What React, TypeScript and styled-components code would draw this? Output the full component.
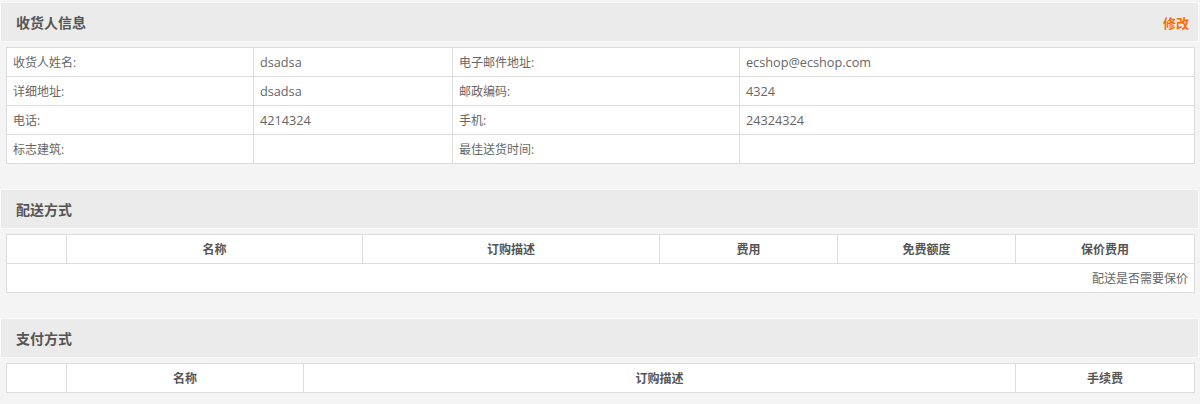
import styled, { createGlobalStyle } from 'styled-components';

const GlobalStyle = createGlobalStyle`
  html, body {
    margin: 0;
    padding: 0;
    background: #f4f4f4;
  }
  body {
    font-family: 'Open Sans', 'Noto Sans CJK SC', sans-serif;
    font-size: 12px;
    color: #666;
  }
`;

const Page = styled.div`
  padding-top: 2px;
  width: 1200px;
`;

const Section = styled.section`
  margin-bottom: 25px;
`;

const Head = styled.div`
  display: flex;
  align-items: center;
  justify-content: space-between;
  height: 38px;
  margin-right: 1px;
  padding: 0 9px 0 15px;
  background: #ebebeb;
  border: 1px solid #fafafa;
`;

const Title = styled.h3`
  margin: 0;
  font-size: 14px;
  font-weight: bold;
  color: #555;
`;

const EditLink = styled.a`
  font-size: 13px;
  font-weight: bold;
  color: #ff6a00;
  text-decoration: none;
  cursor: pointer;
`;

const Table = styled.table`
  margin: 5px 6px 0;
  width: 1188px;
  border-collapse: collapse;
  table-layout: fixed;
  background: #fff;
`;

const Th = styled.th`
  height: 28px;
  padding: 0 6px;
  border: 1px solid #dcdcdc;
  font-weight: bold;
  font-size: 12px;
  color: #555;
  text-align: center;
`;

// label cells are Chinese at 12px, values are latin/digits at 13px
const Td = styled.td<{ $align?: 'left' | 'right'; $value?: boolean }>`
  height: 28px;
  padding: 0 6px;
  border: 1px solid #dcdcdc;
  text-align: ${(p) => p.$align || 'left'};
  font-size: ${(p) => (p.$value ? '12.7px' : '12px')};
  color: #666;
  white-space: nowrap;
`;

const consignee = [
  ['收货人姓名:', 'dsadsa', '电子邮件地址:', 'ecshop@ecshop.com'],
  ['详细地址:', 'dsadsa', '邮政编码:', '4324'],
  ['电话:', '4214324', '手机:', '24324324'],
  ['标志建筑:', '', '最佳送货时间:', ''],
];

const shippingCols = [
  { w: 60, t: '' },
  { w: 296, t: '名称' },
  { w: 297, t: '订购描述' },
  { w: 178, t: '费用' },
  { w: 178, t: '免费额度' },
  { w: 179, t: '保价费用' },
];

const payCols = [
  { w: 60, t: '' },
  { w: 237, t: '名称' },
  { w: 712, t: '订购描述' },
  { w: 179, t: '手续费' },
];

export default function App() {
  return (
    <Page>
      <GlobalStyle />

      <Section>
        <Head>
          <Title>收货人信息</Title>
          <EditLink>修改</EditLink>
        </Head>
        <Table>
          <colgroup>
            <col style={{ width: 247 }} />
            <col style={{ width: 199 }} />
            <col style={{ width: 287 }} />
            <col style={{ width: 455 }} />
          </colgroup>
          <tbody>
            {consignee.map((r) => (
              <tr key={r[0]}>
                {r.map((c, i) => (
                  <Td key={i} $value={i % 2 === 1}>
                    {c}
                  </Td>
                ))}
              </tr>
            ))}
          </tbody>
        </Table>
      </Section>

      <Section>
        <Head>
          <Title>配送方式</Title>
        </Head>
        <Table>
          <colgroup>
            {shippingCols.map((c, i) => (
              <col key={i} style={{ width: c.w }} />
            ))}
          </colgroup>
          <thead>
            <tr>
              {shippingCols.map((c, i) => (
                <Th key={i}>{c.t}</Th>
              ))}
            </tr>
          </thead>
          <tbody>
            <tr>
              <Td colSpan={6} $align='right'>
                配送是否需要保价
              </Td>
            </tr>
          </tbody>
        </Table>
      </Section>

      <Section>
        <Head>
          <Title>支付方式</Title>
        </Head>
        <Table>
          <colgroup>
            {payCols.map((c, i) => (
              <col key={i} style={{ width: c.w }} />
            ))}
          </colgroup>
          <thead>
            <tr>
              {payCols.map((c, i) => (
                <Th key={i}>{c.t}</Th>
              ))}
            </tr>
          </thead>
        </Table>
      </Section>
    </Page>
  );
}
